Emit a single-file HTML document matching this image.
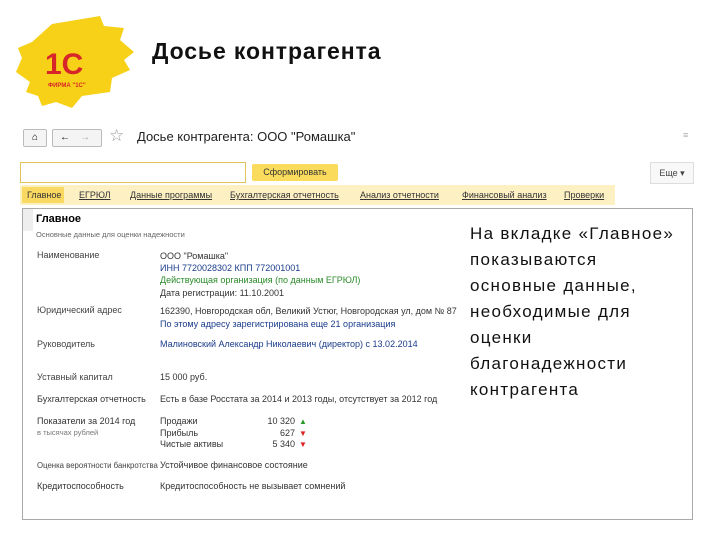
<!DOCTYPE html>
<html><head><meta charset="utf-8"><style>
body{margin:0;width:720px;height:540px;background:#fff;position:relative;overflow:hidden;font-family:"Liberation Sans",sans-serif;}
.a{position:absolute;white-space:nowrap}
.s{font-size:9px;color:#333}
.l{color:#444}
.u{text-decoration:underline;color:#333;font-size:9px}
</style></head><body>
<svg class="a" style="left:12px;top:12px" width="125" height="98" viewBox="0 0 125 98">
<path d="M40 12 L88 4 L92 14 L112 16 L108 28 L122 40 L112 48 L118 58 L100 66 L98 80 L70 84 L60 96 L44 90 L30 94 L26 84 L14 80 L18 70 L4 60 L10 46 L6 36 L20 30 Z" fill="#f7d117"/>
<text x="33" y="62" font-family="Liberation Sans" font-weight="bold" font-size="30" fill="#d6262a">1С</text>
<text x="36" y="75" font-family="Liberation Sans" font-weight="bold" font-size="6" fill="#d6262a">ФИРМА "1С"</text>
</svg>
<div class="a" style="left:152px;top:38px;font-size:23px;font-weight:bold;color:#111;letter-spacing:0.9px">Досье контрагента</div>

<div class="a" style="left:23px;top:129px;width:22px;height:16px;border:1px solid #bbb;border-radius:2px;background:#f4f4f4;font-size:10px;text-align:center;line-height:16px">⌂</div>
<div class="a" style="left:52px;top:129px;width:48px;height:16px;border:1px solid #bbb;border-radius:2px;background:#f4f4f4;font-size:10px;line-height:16px"><span style="margin-left:7px">←</span><span style="margin-left:10px;color:#aaa">→</span></div>
<div class="a" style="left:109px;top:126px;font-size:17px;color:#999">☆</div>
<div class="a" style="left:137px;top:129px;font-size:13px;color:#222">Досье контрагента: ООО "Ромашка"</div>
<div class="a" style="left:683px;top:130px;font-size:9px;color:#aaa">≡</div>

<div class="a" style="left:20px;top:162px;width:224px;height:19px;border:1px solid #e2c55a;background:#fff"></div>
<div class="a" style="left:252px;top:164px;width:86px;height:17px;background:#fadb5b;border-radius:2px;font-size:9px;text-align:center;line-height:17px;color:#333">Сформировать</div>
<div class="a" style="left:650px;top:162px;width:42px;height:20px;border:1px solid #ddd;background:#f8f8f8;font-size:9px;line-height:20px;text-align:center;color:#444">Еще ▾</div>

<div class="a" style="left:20px;top:185px;width:595px;height:20px;background:#fdf1c4"></div>
<div class="a" style="left:22px;top:187px;width:42px;height:16px;background:#fad963"></div>
<div class="a s" style="left:27px;top:190px">Главное</div>
<div class="a u" style="left:79px;top:190px">ЕГРЮЛ</div>
<div class="a u" style="left:130px;top:190px">Данные программы</div>
<div class="a u" style="left:230px;top:190px">Бухгалтерская отчетность</div>
<div class="a u" style="left:360px;top:190px">Анализ отчетности</div>
<div class="a u" style="left:462px;top:190px">Финансовый анализ</div>
<div class="a u" style="left:564px;top:190px">Проверки</div>

<div class="a" style="left:22px;top:208px;width:669px;height:310px;border:1px solid #aaa"></div>
<div class="a" style="left:23px;top:209px;width:10px;height:22px;background:#eee"></div>
<div class="a" style="left:36px;top:213px;font-size:11px;font-weight:bold">Главное</div>
<div class="a" style="left:36px;top:230px;font-size:7.5px;color:#666">Основные данные для оценки надежности</div>

<div class="a s l" style="left:37px;top:250px">Наименование</div>
<div class="a s" style="left:160px;top:250px;line-height:12.2px">ООО "Ромашка"<br><span style="color:#1a3c8a">ИНН 7720028302 КПП 772001001</span><br><span style="color:#2a8a2a">Действующая организация (по данным ЕГРЮЛ)</span><br>Дата регистрации: 11.10.2001</div>
<div class="a s l" style="left:37px;top:305px">Юридический адрес</div>
<div class="a s" style="left:160px;top:305px;line-height:12.5px">162390, Новгородская обл, Великий Устюг, Новгородская ул, дом № 87<br><span style="color:#1a3c8a">По этому адресу зарегистрирована еще 21 организация</span></div>
<div class="a s l" style="left:37px;top:339px">Руководитель</div>
<div class="a s" style="left:160px;top:339px;color:#1a3c8a">Малиновский Александр Николаевич (директор) с 13.02.2014</div>
<div class="a s l" style="left:37px;top:372px">Уставный капитал</div>
<div class="a s" style="left:160px;top:372px">15 000 руб.</div>
<div class="a s" style="left:37px;top:394px">Бухгалтерская отчетность</div>
<div class="a s" style="left:160px;top:394px">Есть в базе Росстата за 2014 и 2013 годы, отсутствует за 2012 год</div>
<div class="a s" style="left:37px;top:416px">Показатели за 2014 год</div>
<div class="a" style="left:37px;top:428px;font-size:7.5px;color:#777">в тысячах рублей</div>
<div class="a s" style="left:160px;top:416px;line-height:11.5px">Продажи<br>Прибыль<br>Чистые активы</div>
<div class="a s" style="left:255px;top:416px;line-height:11.5px;text-align:right;width:40px">10 320<br>627<br>5 340</div>
<div class="a" style="left:299px;top:416px;font-size:8px;line-height:11.5px"><span style="color:#2a9a2a">▲</span><br><span style="color:#d22">▼</span><br><span style="color:#d22">▼</span></div>
<div class="a l" style="left:37px;top:461px;font-size:7.8px">Оценка вероятности банкротства</div>
<div class="a s" style="left:160px;top:460px">Устойчивое финансовое состояние</div>
<div class="a s" style="left:37px;top:481px">Кредитоспособность</div>
<div class="a s" style="left:160px;top:481px">Кредитоспособность не вызывает сомнений</div>

<div class="a" style="left:470px;top:221px;font-size:17px;line-height:26px;color:#111;letter-spacing:1.3px">На вкладке «Главное»<br>показываются<br>основные данные,<br>необходимые для<br>оценки<br>благонадежности<br>контрагента</div>
</body></html>
